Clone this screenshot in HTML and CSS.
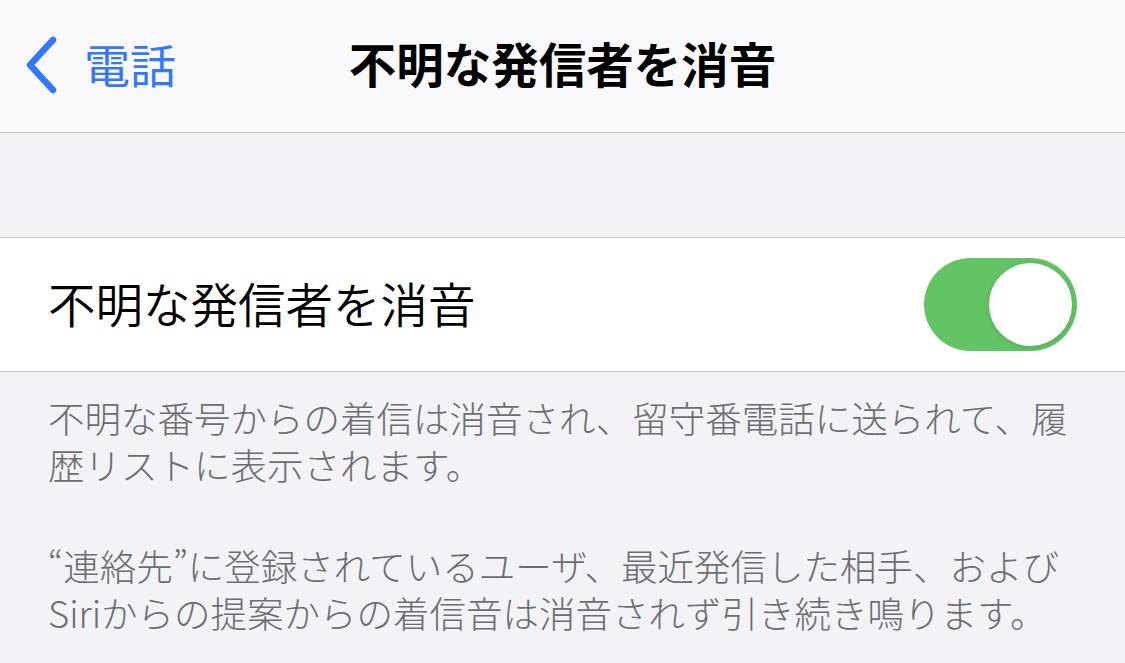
FILE: index.html
```html
<!DOCTYPE html>
<html lang="ja">
<head>
<meta charset="utf-8">
<link rel="stylesheet" href="styles.css">
</head>
<body>
<div class="screen">
  <header class="nav">
    <div class="back">
      <svg class="chev" width="40" height="60" viewBox="0 0 40 60"><path d="M31 5 L8 30 L31 55" fill="none" stroke="#3478f6" stroke-width="6.5" stroke-linecap="round" stroke-linejoin="round"/></svg>
      <span class="back-label">電話</span>
    </div>
    <div class="title">不明な発信者を消音</div>
  </header>
  <div class="spacer"></div>
  <div class="row">
    <span class="row-label">不明な発信者を消音</span>
    <div class="toggle"><div class="knob"></div></div>
  </div>
  <div class="footer">
    <p><span class="line">不明な番号からの着信は消音され、留守番電話に送られて、履</span><span class="line">歴リストに表示されます。</span></p>
    <p><span class="line">“連絡先”に登録されているユーザ、最近発信した相手、および</span><span class="line">Siriからの提案からの着信音は消音されず引き続き鳴ります。</span></p>
  </div>
</div>
</body>
</html>
```
FILE: styles.css
```css
html, body {
  margin: 0;
  padding: 0;
  background: #f2f2f7;
}
.screen {
  width: 1125px;
  height: 663px;
  overflow: hidden;
  font-family: "Noto Sans CJK JP", "Noto Sans", sans-serif;
  background: #f2f2f7;
}
.nav {
  position: relative;
  height: 132px;
  background: #f9f9fb;
  border-bottom: 1px solid #c4c4c7;
  display: flex;
  align-items: center;
}
.back {
  display: flex;
  align-items: center;
  padding-left: 22px;
  gap: 22px;
  margin-top: -2px;
}
.chev {
  display: block;
}
.back-label {
  font-size: 46px;
  color: #3478f6;
  line-height: 1;
  margin-top: -4px;
}
.title {
  position: absolute;
  left: 0;
  right: 0;
  top: 0;
  height: 132px;
  display: flex;
  align-items: center;
  justify-content: center;
  font-size: 47.5px;
  font-weight: 700;
  color: #000;
  pointer-events: none;
  margin-top: -4px;
}
.spacer {
  height: 104px;
}
.row {
  height: 133px;
  background: #fff;
  border-top: 1px solid #c8c8cc;
  border-bottom: 1px solid #c8c8cc;
  display: flex;
  align-items: center;
  justify-content: space-between;
  padding: 0 48px 0 48px;
}
.row-label {
  font-size: 47.5px;
  color: #000;
  line-height: 1;
  margin-top: -4px;
  font-weight: 350;
}
.toggle {
  width: 153px;
  height: 93px;
  border-radius: 47px;
  background: #62c465;
  position: relative;
}
.knob {
  position: absolute;
  right: 5px;
  top: 5px;
  width: 83px;
  height: 83px;
  border-radius: 50%;
  background: #fff;
  box-shadow: 0 2px 6px rgba(0,0,0,0.12);
}
.footer {
  padding: 22px 40px 0 48px;
  color: #6d6d72;
  font-size: 36.5px;
  font-weight: 300;
}
.footer p {
  margin: 0 0 54px 0;
  white-space: nowrap;
  display: flex;
  flex-direction: column;
}
.line {
  display: block;
  height: 47px;
  line-height: 47px;
  overflow: visible;
}
```
